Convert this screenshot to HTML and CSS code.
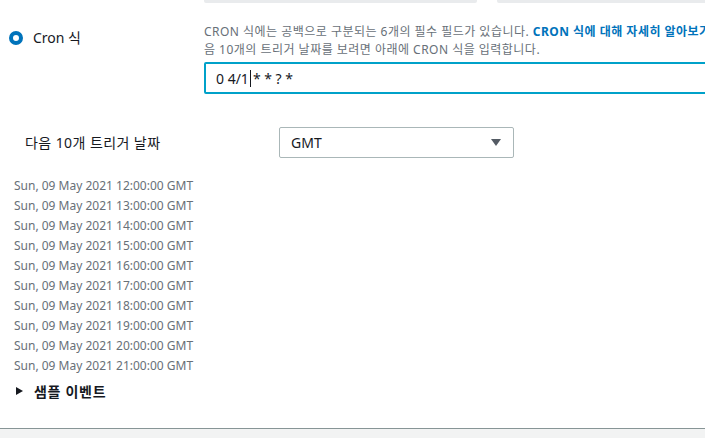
FILE: index.html
```html
<!DOCTYPE html>
<html lang="ko">
<head>
<meta charset="utf-8">
<link rel="stylesheet" href="styles.css">
</head>
<body>
<div class="page">
  <div class="cron-row">
    <div class="option">
      <span class="radio"></span>
      <span class="option-label">Cron 식</span>
    </div>
    <div class="cron-main">
      <div class="tabs"><span class="tab tab-a"></span><span class="tab tab-b"></span></div>
      <p class="desc">CRON 식에는 공백으로 구분되는 6개의 필수 필드가 있습니다. <a class="link">CRON 식에 대해 자세히 알아보기.</a> 다<br>음 10개의 트리거 날짜를 보려면 아래에 CRON 식을 입력합니다.</p>
      <div class="input"><span>0 4/1</span><span class="caret"></span><span>* * ? *</span></div>
    </div>
  </div>
  <div class="trigger-row">
    <span class="trigger-label">다음 10개 트리거 날짜</span>
    <div class="select"><span>GMT</span><span class="arrow"></span></div>
  </div>
  <ul class="dates">
    <li>Sun, 09 May 2021 12:00:00 GMT</li>
    <li>Sun, 09 May 2021 13:00:00 GMT</li>
    <li>Sun, 09 May 2021 14:00:00 GMT</li>
    <li>Sun, 09 May 2021 15:00:00 GMT</li>
    <li>Sun, 09 May 2021 16:00:00 GMT</li>
    <li>Sun, 09 May 2021 17:00:00 GMT</li>
    <li>Sun, 09 May 2021 18:00:00 GMT</li>
    <li>Sun, 09 May 2021 19:00:00 GMT</li>
    <li>Sun, 09 May 2021 20:00:00 GMT</li>
    <li>Sun, 09 May 2021 21:00:00 GMT</li>
  </ul>
  <div class="sample"><span class="tri"></span><span class="sample-label">샘플 이벤트</span></div>
</div>
<div class="footer"></div>
</body>
</html>
```

FILE: styles.css
```css
html, body {
  margin: 0;
  padding: 0;
  background: #fff;
  overflow: hidden;
  width: 705px;
  height: 438px;
}
body {
  font-family: "Noto Sans", "Noto Sans CJK KR", sans-serif;
  color: #16191f;
  display: flex;
  flex-direction: column;
}
.page {
  height: 428px;
  flex: none;
}
.cron-row {
  display: flex;
}
.option {
  width: 204px;
  flex: none;
  display: flex;
  align-items: center;
  gap: 10px;
  padding-left: 9px;
  box-sizing: border-box;
  height: 20px;
  margin-top: 28px;
  align-self: flex-start;
}
.radio {
  width: 14px;
  height: 14px;
  box-sizing: border-box;
  border: 4px solid #0073bb;
  border-radius: 50%;
  background: #fff;
  flex: none;
}
.option-label {
  font-size: 14px;
  line-height: 20px;
}
.cron-main {
  flex: none;
  width: 560px;
}
.tabs {
  display: flex;
  gap: 20px;
  height: 3px;
}
.tab {
  background: #e9ebed;
  border-radius: 0 0 2px 2px;
  height: 3px;
}
.tab-a { width: 273px; }
.tab-b { width: 240px; }
.desc {
  margin: 20px 0 0;
  font-size: 12px;
  line-height: 18px;
  color: #687078;
  white-space: nowrap;
  letter-spacing: 0.04em;
}
.link {
  color: #0073bb;
  font-weight: 700;
}
.input {
  margin-top: 3px;
  height: 32px;
  box-sizing: border-box;
  border: 2px solid #00a1c9;
  border-radius: 2px;
  display: flex;
  align-items: center;
  padding-left: 10px;
  font-size: 14px;
  white-space: pre;
}
.caret {
  width: 1px;
  height: 17px;
  background: #16191f;
  margin: 0 2px 0 1px;
}
.trigger-row {
  display: flex;
  align-items: center;
  margin-top: 33px;
  height: 30px;
}
.trigger-label {
  font-size: 14px;
  width: 254px;
  padding-left: 25px;
  flex: none;
  letter-spacing: 0.03em;
}
.select {
  width: 235px;
  height: 31px;
  box-sizing: border-box;
  border: 1px solid #aab7b8;
  border-radius: 2px;
  display: flex;
  align-items: center;
  justify-content: space-between;
  padding: 0 12px 0 11px;
  font-size: 14px;
}
.arrow {
  width: 0;
  height: 0;
  border-left: 5px solid transparent;
  border-right: 5px solid transparent;
  border-top: 7px solid #545b64;
}
.dates {
  list-style: none;
  margin: 19px 0 0;
  padding: 0 0 0 14px;
  font-size: 12px;
  line-height: 20px;
  color: #687078;
}
.sample {
  margin-top: 4px;
  display: flex;
  align-items: center;
  padding-left: 16px;
  gap: 11px;
  height: 22px;
}
.tri {
  width: 0;
  height: 0;
  border-top: 4.5px solid transparent;
  border-bottom: 4.5px solid transparent;
  border-left: 7px solid #16191f;
}
.sample-label {
  font-size: 14px;
  font-weight: 700;
  letter-spacing: 0.05em;
}
.footer {
  flex: 1;
  border-top: 1px solid #879596;
  background: #f2f3f3;
}
```
